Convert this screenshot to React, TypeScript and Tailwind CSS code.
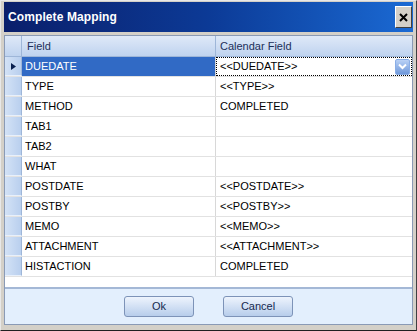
const rows: [string, string][] = [
  ["DUEDATE", "<<DUEDATE>>"],
  ["TYPE", "<<TYPE>>"],
  ["METHOD", "COMPLETED"],
  ["TAB1", ""],
  ["TAB2", ""],
  ["WHAT", ""],
  ["POSTDATE", "<<POSTDATE>>"],
  ["POSTBY", "<<POSTBY>>"],
  ["MEMO", "<<MEMO>>"],
  ["ATTACHMENT", "<<ATTACHMENT>>"],
  ["HISTACTION", "COMPLETED"],
];

const App = () => {
  return (
    <div className="w-[417px] h-[331px] bg-[#d4d0c8] border border-t-[#e8e8e8] border-l-[#e8e8e8] border-r-[#404040] border-b-[#202020] p-[3px] pt-[1px] pb-[5px] flex flex-col font-['Liberation_Sans',Arial,sans-serif] text-[11px]">
      {/* title bar */}
      <div className="h-[30px] shrink-0 flex items-center justify-between pl-[4px] pr-[1px] bg-gradient-to-r from-[#0a1f6b] via-[#0c3a96] to-[#1b6ad4]">
        <span className="text-white font-bold text-[12px] tracking-[0.1px]">Complete Mapping</span>
        <button className="w-[17px] h-[22px] bg-[#d4d0c8] border border-t-white border-l-white border-r-[#404040] border-b-[#404040] flex items-center justify-center">
          <svg width="9" height="9" viewBox="0 0 9 9">
            <path d="M1 1 L8 8 M8 1 L1 8" stroke="#000" strokeWidth="2" />
          </svg>
        </button>
      </div>

      <div className="mt-[3px] flex-1 flex flex-col border border-[#8a9ab5] bg-white">
        {/* grid */}
        <div className="flex-1 flex flex-col bg-white">
          <div className="h-[21px] flex bg-gradient-to-b from-[#dfe9f8] to-[#bfd3ef] border-b border-[#9eb6d8] text-[#1c2f5a]">
            <div className="w-[17px] border-r border-[#9eb6d8]" />
            <div className="w-[194px] border-r border-[#9eb6d8] pl-[5px] flex items-center">Field</div>
            <div className="flex-1 pl-[4px] flex items-center">Calendar Field</div>
          </div>
          {rows.map(([field, cal], i) => (
            <div key={field} className="h-[20px] flex border-b border-[#e2e2e2] text-black">
              <div className="w-[17px] bg-gradient-to-r from-[#d3e2f6] to-[#b9cfee] border-r border-[#9eb6d8] border-b border-b-[#e8f0fb] flex items-center justify-center">
                {i === 0 && (
                  <svg width="5" height="7" viewBox="0 0 5 7">
                    <path d="M0 0 L5 3.5 L0 7 Z" fill="#0a2050" />
                  </svg>
                )}
              </div>
              <div
                className={
                  i === 0
                    ? "w-[194px] bg-[#316ac5] text-white pl-[3px] flex items-center border-r border-[#d8d8d8]"
                    : "w-[194px] pl-[3px] flex items-center border-r border-[#d8d8d8]"
                }
              >
                {field}
              </div>
              {i === 0 ? (
                <div className="flex-1 flex items-center justify-between pl-[3px] pr-[1px] border border-dotted border-black">
                  <span>{cal}</span>
                  <div className="w-[15px] h-[16px] rounded-[2px] bg-gradient-to-b from-[#b9d1f5] to-[#6f98da] flex items-center justify-center border border-[#8aaee6]">
                    <svg width="9" height="7" viewBox="0 0 9 7">
                      <path d="M1 1.5 L4.5 5 L8 1.5" stroke="#fff" strokeWidth="2" fill="none" />
                    </svg>
                  </div>
                </div>
              ) : (
                <div className="flex-1 pl-[4px] flex items-center">{cal}</div>
              )}
            </div>
          ))}
        </div>

        {/* buttons */}
        <div className="h-[37px] shrink-0 bg-[#e3effd] border-t-2 border-[#a4b8d6] flex items-center justify-center gap-[29px]">
          <button className="w-[70px] h-[21px] rounded-[3px] border border-[#7d93b8] bg-gradient-to-b from-[#eef4fd] to-[#b7cdeb] text-[#15294f]">
            Ok
          </button>
          <button className="w-[70px] h-[21px] rounded-[3px] border border-[#7d93b8] bg-gradient-to-b from-[#eef4fd] to-[#b7cdeb] text-[#15294f]">
            Cancel
          </button>
        </div>
      </div>
    </div>
  );
};

export default App;
